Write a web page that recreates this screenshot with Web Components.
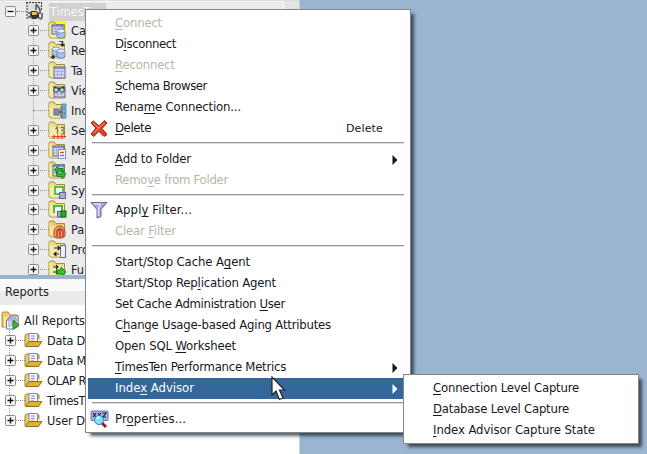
<!DOCTYPE html>
<html lang="en"><head><meta charset="utf-8"><title>TimesTen connection menu</title>
<style>html,body{margin:0;width:647px;height:454px;overflow:hidden;background:#9bb4d0}</style></head>
<body><ide-workspace></ide-workspace>
<script>
const FONT = '"DejaVu Sans Condensed","DejaVu Sans",sans-serif';
const define = (name, init) => customElements.define(name, class extends HTMLElement {
  connectedCallback() {
    if (this.shadowRoot) return;
    const root = this.attachShadow({mode: 'open'});
    root.innerHTML = init(this);
  }
});

const folder = (c = '#e9df86', f = '#f3edac') => `<path d="M1 4V2.5Q1 1 2.5 1H6L8 3.5H16.500V17H2.500L1 15.500Z" fill="${c}" stroke="#a58f38"/><path d="M3 6H16V16.500H3Z" fill="${f}"/><path d="M2 3V15" stroke="#fff5b5"/>`;
const grid = (x, y, w, h) => `<rect x="${x}" y="${y}" width="${w}" height="${h}" fill="#dcdcf8" stroke="#5d5d96"/><path d="M${x} ${y+1}h${w}" stroke="#7070b0" stroke-width="1.500"/><path d="M${x+w/3} ${y}v${h}M${x+2*w/3} ${y}v${h}M${x} ${y+h*.4}h${w}M${x} ${y+h*.7}h${w}" stroke="#a3a1d0" stroke-width=".9"/>`;
const cyl = (x, y, w = 8, h = 9) => `<path d="M${x} ${y+2}v${h-3}q${w/2} 3 ${w} 0v${-(h-3)}" fill="#a9c1e5" stroke="#5b78aa" stroke-width=".8"/><ellipse cx="${x+w/2}" cy="${y+2}" rx="${w/2}" ry="2" fill="#e2ecfb" stroke="#6d8abb" stroke-width=".8"/>`;
const ICONS = {
  root: `<rect x="1" y="0" width="15" height="18" fill="#dedede"/><path d="M1 0V18M0 .5H16M15.500 0V8" stroke="#333" stroke-dasharray="2 1"/><path d="M10 2Q13 5 14 8V12M10 3V8M12 15Q17 20 16 11" stroke="#555" stroke-width="1.500" fill="none"/><path d="M5 9H10L13 11V15L10 17H6L4 14Z" fill="#333"/><path d="M6 10H10L12 12L9 13H6Z" fill="#ffbb45"/><path d="M2 11H6M2 15H6" stroke="#555" stroke-width="1.500"/>`,
  cache: `<path d="M5 0H18V18H9Z" fill="#ffff00"/>${folder()}${grid(4,4,11,9)}${cyl(9,8)}`,
  repl: `<rect x="4" y="3" width="14" height="15" fill="#fff"/>${folder()}${cyl(4,6,8,9)}${cyl(9,8)}<path d="M11 0H14.500V5M12.500 3L14.500 5L16.500 3M5 14V18M3 16H7" stroke="#252525" stroke-width="1.300" fill="none"/>`,
  table: folder() + grid(6,6,11,11),
  view: folder() + grid(6,6,11,10) + `<circle cx="8" cy="9" r="2.300" fill="#bce1d6" stroke="#23353c"/><circle cx="14" cy="9" r="2.300" fill="#bce1d6" stroke="#23353c"/><path d="M10 8Q11 7 12 8M6 7L7 5M16 7L15 5" stroke="#222" fill="none"/>`,
  index: folder() + `<rect x="6" y="8" width="5" height="6" fill="#8686bd" stroke="#626294"/><path d="M11 11H14M13 6V16M13 6H15M13 16H15" stroke="#333"/><path d="M14 3h4v4h-4ZM14 8h4v4h-4ZM14 13h4v4h-4Z" fill="#73b5e4" stroke="#4b779d" stroke-width=".8"/>`,
  seq: folder() + `<path d="M7.500 8L9.500 6V13M12.500 7Q16 5 16 8L14 9.500Q17 11 15.500 13H12.500" fill="none" stroke="#806840" stroke-width="1.200"/><path d="M4 15.500H18M6 14V18M10 14V18M14 14V18" stroke="#e63d18" stroke-width="1.100"/>`,
  mview: folder() + grid(5,5,11,10) + `<rect x="10.500" y="8.500" width="7" height="9" fill="#fff" stroke="#7793ce"/><path d="M12 11.500H16" stroke="#e94a37" stroke-width="1.500"/><path d="M12 14.500H16" stroke="#5778c9" stroke-width="1.500"/>`,
  mlog: folder() + grid(5,4,11,11) + `<path d="M6 9L10 5V7.500H15V12L13 10H10V12Z" fill="#25bd23" stroke="#08720b" stroke-width=".8"/><path d="M18 13L14 18V15.500H9L8 11L11 13H14V9.500Z" fill="#25c91e" stroke="#08720b" stroke-width=".8"/>`,
  syn: folder() + `<rect x="7" y="6" width="8" height="7" fill="#f0ffe9" stroke="#29af37" stroke-width="1.500"/><rect x="11.500" y="11.500" width="6" height="6" fill="#a8afe2" stroke="#626598"/>`,
  pub: folder() + `<path d="M6 13V6H14V12" fill="#f1ffe9" stroke="#23a12b" stroke-width="1.500"/><rect x="9.500" y="11.500" width="4.500" height="5.500" fill="#9ba8df" stroke="#54609b"/><rect x="13" y="11" width="5" height="6" fill="#24aa26" stroke="#086b0c"/>`,
  pack: folder('#f1c765','#ffe095') + `<path d="M6 16V11Q7 6 12 6Q17 7 17 12V16L14 18H8Z" fill="#ec9b6a" stroke="#a44825"/><path d="M9 17V11Q12 7 15 11V17M12 9V18" fill="none" stroke="#ba3420" stroke-width="1.300"/>`,
  proc: folder() + `<rect x="12.500" y="5.500" width="5" height="12" fill="#edf0ff" stroke="#646b9c"/><path d="M6 8H12M9.500 6L12 8L9.500 10M11 14H6M8.500 12L6 14L8.500 16" stroke="#222" stroke-width="1.200" fill="none"/>`,
  func: folder() + `<path d="M5 7H10M8 5L10 7L8 9M5 12H10M8 10L10 12L8 14M5 16H8" stroke="#222" stroke-width="1.200" fill="none"/><path d="M9 10H13V7L18 12L13 17V14H9Z" fill="#35c32d" stroke="#137a13"/>`,
  reports: `<path d="M1 16V2Q1 1 3 1H7L9 4H16Q17 4 17 6V16Z" fill="#e9cf70" stroke="#b18a31"/><path d="M3 6H16V16H3Z" fill="#f7e6a0"/><path d="M9 5h8v10h-8Z" fill="#f4f4ff" stroke="#7274aa"/><path d="M7 7h8v10h-8Z" fill="#e9eaff" stroke="#7274aa"/><path d="M5.500 9h8v9h-8Z" fill="#fff" stroke="#7274aa"/><path d="M7 11h5M7 13h5M7 15h4" stroke="#8c91c0"/><path d="M12 9.500L18 14L12 18Z" fill="#35bf32" stroke="#16831a"/>`,
  open: `<path d="M1 15V5Q1 3 3 3H7L8 4H15V8" fill="#e8cd6b" stroke="#a18335"/><path d="M5 2.500H13.500V13H5Z" fill="#f8f8ff" stroke="#8685af"/><path d="M7 5H11M7 7.500H11M7 10H10" stroke="#8585b3"/><path d="M1.500 15.500L5 10.500H18L14.500 15.500Z" fill="#dcb22f" stroke="#927119"/>`,
  del: `<path d="M3.500 2L9 7L14.500 1.500L17 4L12 9.500L17 15.500L14 17.500L8.500 12L4 17.500L1 15L6 9L1 4Z" fill="#ed3b18" stroke="#7d2a1c" stroke-linejoin="round"/><path d="M3 3.500L8.500 9L14.500 3.500M4 14L9 9" stroke="#ff7650" stroke-width="1.300" fill="none"/>`,
  filter: `<path d="M1 1.500H17L11 8.500V15.500L7 17V8.500Z" fill="#a7a6dc" stroke="#696a91" stroke-linejoin="round"/><path d="M3.500 3H10L8.500 8V15" fill="none" stroke="#dcdcfa" stroke-width="1.500"/>`,
  props: `<rect x="1" y="1" width="17" height="9.500" rx="1" fill="#abade3" stroke="#7275ae"/><path d="M3 3L6 7M6 3L3 7M8 3L9.500 5L11 3M9.500 5V7M12.500 3H16L13 7H16" stroke="#24243e" fill="none" stroke-width="1.200"/><path d="M12 13L16 17" stroke="#981e25" stroke-width="3"/><circle cx="9" cy="10" r="4.500" fill="#7fe5f5" stroke="#278bae"/><path d="M6.500 9Q7.500 7 10 7" stroke="#dcffff" stroke-width="1.500" fill="none"/>`
};

define('ide-icon', el => `<style>:host{display:block;width:19px;height:19px;flex:none}svg{display:block}</style><svg width="19" height="19" viewBox="0 0 19 19">${ICONS[el.getAttribute('name')]}</svg>`);

/* A one-line label; its tracking is adjusted so that it fills the given width. */
customElements.define('ui-label', class extends HTMLElement {
  connectedCallback() {
    if (!this.shadowRoot) this.attachShadow({mode: 'open'}).innerHTML = `<style>:host{display:block;white-space:nowrap;font:12.6px/15px ${FONT}}span{display:inline-block;white-space:nowrap}::slotted(u){text-underline-offset:2px;text-decoration-thickness:1px;text-decoration-skip-ink:none}</style><span><slot></slot></span>`;
    const span = this.shadowRoot.querySelector('span');
    const want = +this.getAttribute('width');
    if (want) span.style.letterSpacing = (want - span.getBoundingClientRect().width) / this.textContent.length + 'px';
  }
});

define('tree-row', el => {
  const lvl = +el.getAttribute('level'), box = el.getAttribute('box');
  return `<style>:host{display:flex;align-items:center;height:var(--row,19.9px);box-sizing:border-box;padding-left:${lvl ? +el.getAttribute('indent') : 1}px;color:#20202a}
  .b{width:11px;height:11px;flex:none;display:block;margin-right:-11px;z-index:1}.stub{width:20px;border-top:1px dotted #8e8e8e;height:0;margin-left:5px;margin-right:-5px}
  .lead{width:${el.getAttribute('lead')}px;display:flex;align-items:center;flex:none}ide-icon{margin-right:${el.getAttribute('gap') || 4}px}
  </style>${el.hasAttribute('flat') ? '' : `<span class="lead">${box ? `<svg class="b" viewBox="0 0 11 11"><rect x=".5" y=".5" width="10" height="10" rx="1" fill="#f6f6f4" stroke="#8b8b8b"/><path d="M2.500 5.500H8.500${box === '+' ? 'M5.500 2.500V8.500' : ''}" stroke="#111" stroke-width="1.300"/></svg>` : ''}<span class="stub"></span></span>`}
  <ide-icon name="${el.getAttribute('icon')}"></ide-icon><ui-label width="${el.getAttribute('w') || ''}">${el.textContent}</ui-label>`;
});

const conn = [['cache','+','Ca'],['repl','+','Re'],['table','+','Ta'],['view','+','Vie'],['index','','Ind'],['seq','+','Se'],['mview','+','Ma'],['mlog','+','Ma'],['syn','+','Sy'],['pub','+','Pu'],['pack','+','Pa'],['proc','+','Pro'],['func','+','Fu']];
define('connections-tree', () => `<style>:host{display:block;height:275px;overflow:hidden;background:#ebebeb;box-sizing:border-box;border-top:1px solid #dcdcdc}
  .in{display:grid;grid-template-columns:1fr 16px;height:274px;box-shadow:inset 0 1px #f8f8f8}.sb{border-left:1px solid #fafafa;background:#e4e4e4;padding:4px 0 0 3px}
  .rows{width:106px;padding-top:1px}.root{display:flex;align-items:center;height:19px;padding-left:5px}
  .root svg{flex:none}.dot{width:10px;border-top:1px dotted #888}.root ide-icon{margin-right:4px}.sel{background:#d1d1d1;color:#f8f8f8;height:18px;flex:1;padding-left:1px;margin-top:1px}.sel ui-label{padding-top:1px}
  .kids{background:repeating-linear-gradient(#999 0 1px,transparent 1px 2px) 33px 0/1px 100% no-repeat}</style>
  <div class="in"><div class="rows"><div class="root"><svg width="11" height="11"><rect x=".5" y=".5" width="10" height="10" rx="1" fill="#f6f6f4" stroke="#8b8b8b"/><path d="M2.500 5.500H8.500" stroke="#111" stroke-width="1.300"/></svg><span class="dot"></span><ide-icon name="root"></ide-icon><div class="sel"><ui-label>TimesT</ui-label></div></div>
  <div class="kids">${conn.map(([i,b,t]) => `<tree-row level="1" indent="28" lead="20" icon="${i}" box="${b}">${t}</tree-row>`).join('')}</div></div>
  <div class="sb"><svg width="10" height="5"><path d="M1 5L5 0L9 5Z" fill="#aaa"/></svg></div></div>`);

define('reports-pane', () => `<style>:host{display:block;height:175px;background:#fff;color:#20202a}
  header{height:26px;box-sizing:border-box;background:linear-gradient(#f9f9f9 0 12px,#ebebeb 12px);padding:5px 0 0 5px}
  .top{padding:5px 0 0;height:20px}.kids{background:repeating-linear-gradient(#999 0 1px,transparent 1px 2px) 9px 0/1px 90px no-repeat}tree-row{--row:20px}</style>
  <header><ui-label width="44">Reports</ui-label></header>
  <div class="top"><tree-row flat icon="reports" w="61">All Reports</tree-row></div>
  <div class="kids">${[['Data D',38],['Data M',39],['OLAP R',39],['TimesT',38],['User D',38]].map(([t, w]) => `<tree-row level="1" indent="5" lead="19" icon="open" box="+" w="${w}">${t}</tree-row>`).join('')}</div>`);

define('menu-item', el => {
  const text = el.innerHTML;
  el.textContent = '';
  return `<style>:host{display:flex;align-items:center;height:21px;padding-left:2px;color:#17171f;box-sizing:border-box}
  :host([disabled]){color:#b7b5a7}:host([active]){background:#336699;color:#fff}
  .i{width:19px;margin-right:6px;flex:none}ui-label{flex:1;font-size:13px;padding-bottom:2px}.k{flex:none;font:11px/15px "DejaVu Sans",sans-serif;padding-bottom:0;margin-right:22px}svg.a{flex:none;margin-right:7px}</style>
  <span class="i">${el.getAttribute('icon') ? `<ide-icon name="${el.getAttribute('icon')}"></ide-icon>` : ''}</span>
  <ui-label width="${el.getAttribute('w')}">${text}</ui-label>
  ${el.hasAttribute('key') ? `<ui-label class="k" width="37">${el.getAttribute('key')}</ui-label>` : ''}
  ${el.hasAttribute('sub') ? '<svg class="a" width="6" height="10"><path d="M.5 0L5.500 5L.5 10Z" fill="currentColor"/></svg>' : ''}`;
});

define('menu-separator', el => `<style>:host{display:block;height:${el.getAttribute('h') || 10}px;padding:3px 0 0 4px;box-sizing:border-box}div{height:1px;background:#999;border-bottom:1px solid #ddd;margin-right:1px}</style><div></div>`);

define('popup-menu', () => `<style>:host{display:block;box-sizing:border-box;background:#fff;border:1px solid #858585;padding:3px 5px 1px 2px;box-shadow:4px 4px 3px -1px rgba(20,30,40,.7)}</style><slot></slot>`);

const it = (w, t, a = '') => `<menu-item w="${w}" ${a}>${t}</menu-item>`;
define('ide-workspace', () => `<style>:host{display:block;position:relative;width:647px;height:454px;background:#9bb4d0;overflow:hidden}
  .side{width:299px;display:flex;flex-direction:column;gap:4px;border-right:1px solid #c9d3df}
  #main{position:absolute;left:85px;top:9px;width:326px;height:424px}
  #sub{position:absolute;left:403px;top:374px;width:236px;height:70px}
  #cur{position:absolute;left:271px;top:376px}</style>
  <div class="side"><connections-tree></connections-tree><reports-pane></reports-pane></div>
  <popup-menu id="main">
  ${it(47,'<u>C</u>onnect','disabled')}${it(61,'D<u>i</u>sconnect')}${it(60,'<u>R</u>econnect','disabled')}${it(92,'<u>S</u>chema Browser')}${it(126,'Rena<u>m</u>e Connection...')}${it(36,'<u>D</u>elete','icon="del" key="Delete"')}
  <menu-separator></menu-separator>${it(76,'<u>A</u>dd to Folder','sub')}${it(113,'Remo<u>v</u>e from Folder','disabled')}
  <menu-separator h="9"></menu-separator>${it(77,'Appl<u>y</u> Filter...','icon="filter"')}${it(61,'Clear <u>F</u>ilter','disabled')}
  <menu-separator></menu-separator>${it(135,'Start/Stop Cache A<u>g</u>ent')}${it(161,'Start/Stop Rep<u>l</u>ication Agent')}${it(170,'Set Cache Administration <u>U</u>ser')}${it(216,'C<u>h</u>ange Usage-based Aging Attributes')}${it(121,'Open SQL <u>W</u>orksheet')}${it(171,'<u>T</u>imesTen Performance Metrics','sub')}${it(79,'Inde<u>x</u> Advisor','active sub')}
  <menu-separator></menu-separator>${it(71,'Pr<u>o</u>perties...','icon="props"')}
  </popup-menu>
  <popup-menu id="sub">${it(146,'<u>C</u>onnection Level Capture')}${it(136,'<u>D</u>atabase Level Capture')}${it(162,'<u>I</u>ndex Advisor Capture State')}</popup-menu>
  <svg id="cur" width="16" height="26"><path d="M1 1V19L5 15L8.500 23.500L12 22L8.500 14H13.500Z" fill="#fff" stroke="#222" stroke-width="1.200"/></svg>`);
</script></body></html>
